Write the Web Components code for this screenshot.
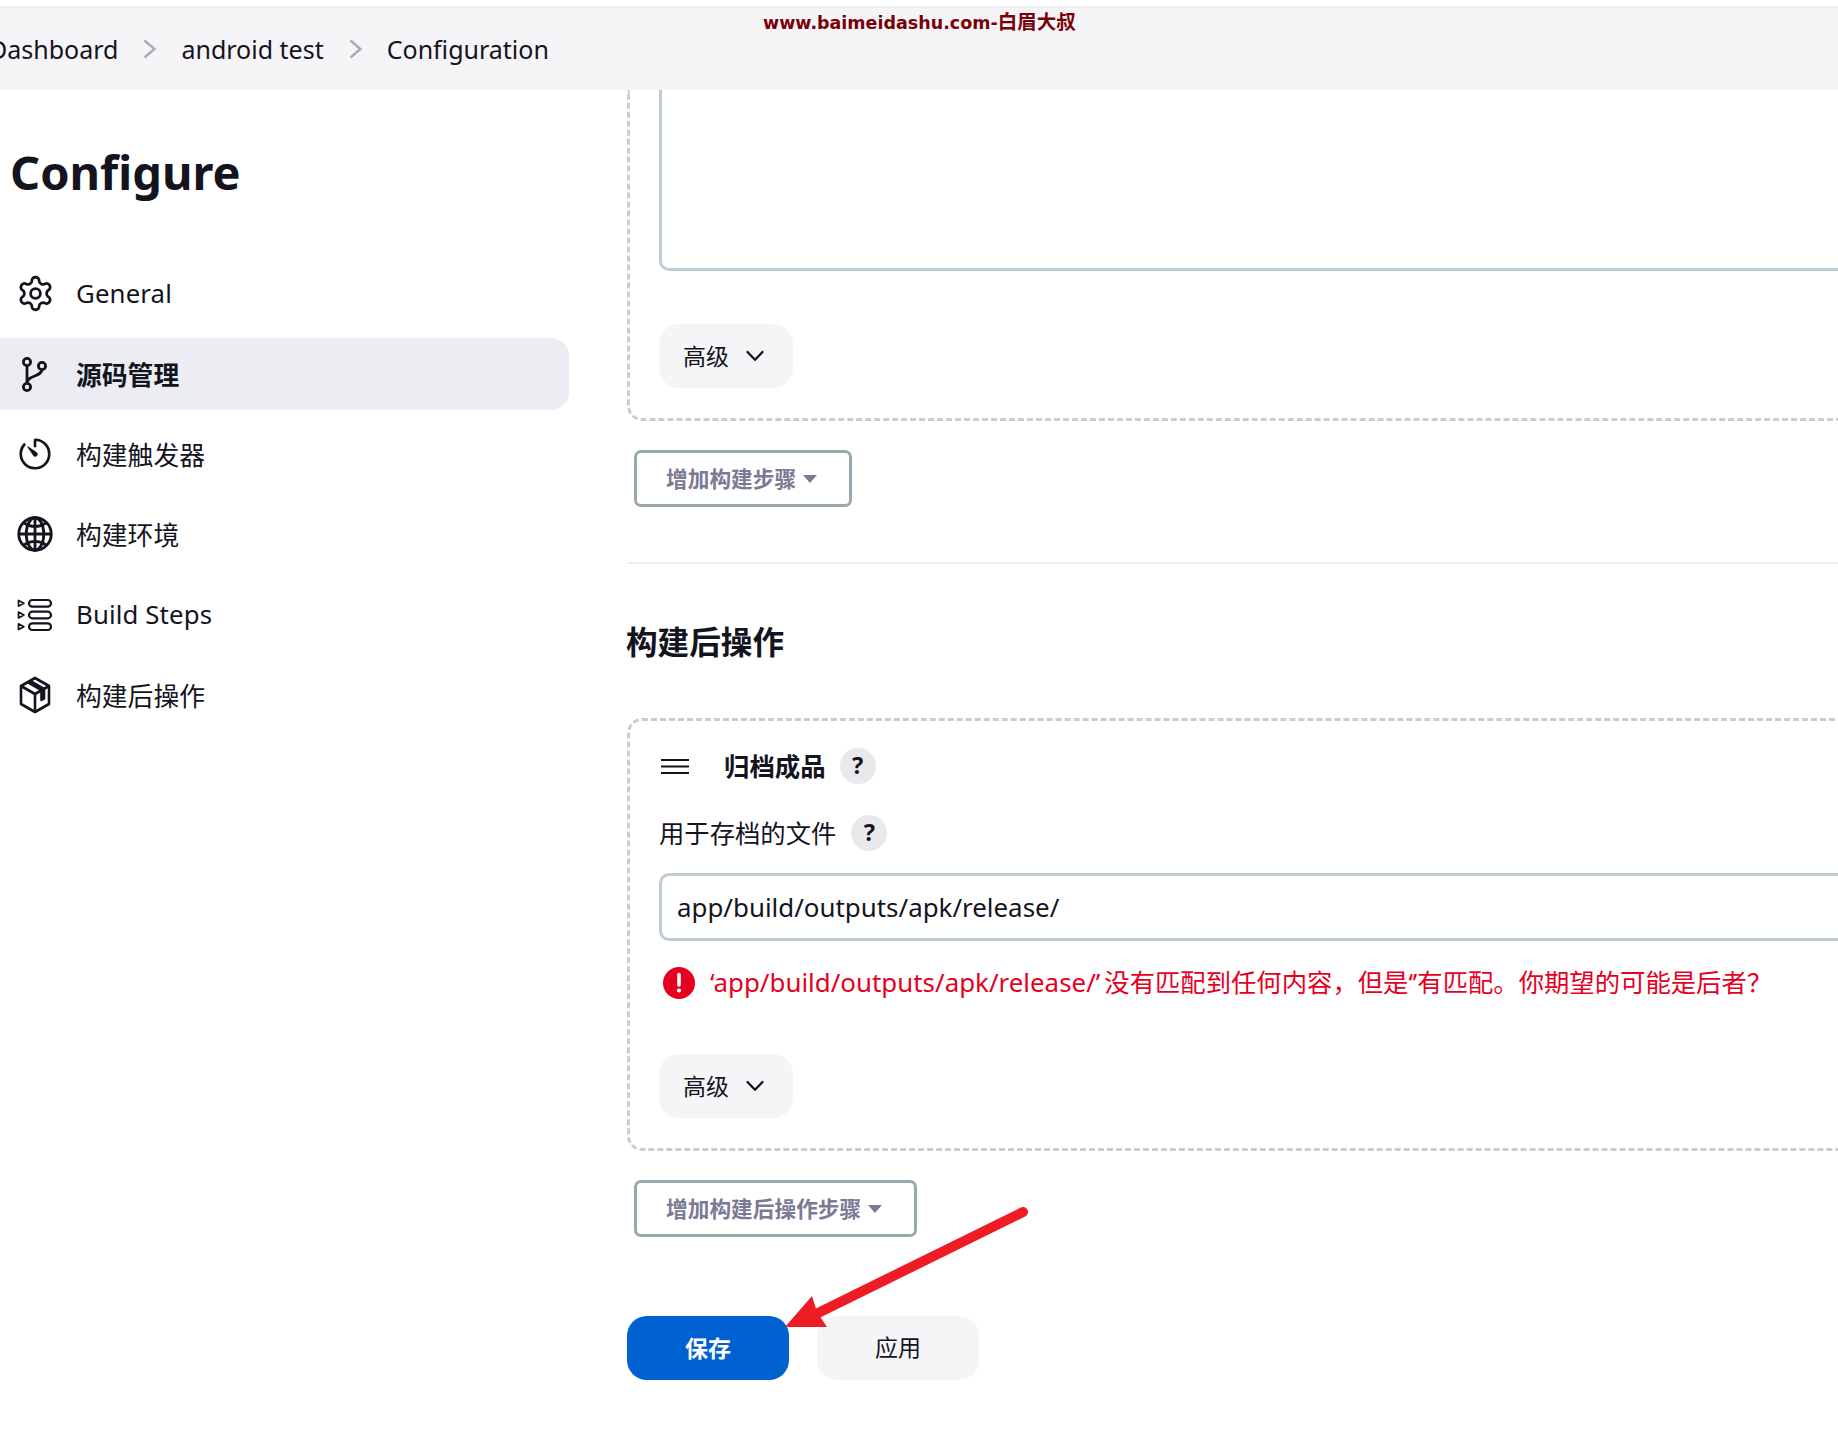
<!DOCTYPE html>
<html lang="zh-CN">
<head>
<meta charset="utf-8">
<title>Configure</title>
<style>
  html, body { margin: 0; padding: 0; overflow: hidden; background: #fff; }
  body { font-family: "Noto Sans", "Noto Sans CJK SC", sans-serif; color: #14141f; }
</style>
</head>
<body>

<jk-app>
  <jk-breadcrumb slot="top"></jk-breadcrumb>
  <jk-sidebar slot="side"></jk-sidebar>

  <jk-box slot="main" clipped>
    <jk-textarea></jk-textarea>
    <jk-advanced style="margin-top:53px"></jk-advanced>
  </jk-box>
  <jk-add-button slot="main" style="margin-top:29px">增加构建步骤</jk-add-button>
  <jk-section-title slot="main">构建后操作</jk-section-title>
  <jk-box slot="main" style="margin-top:56px">
    <jk-step-head>归档成品</jk-step-head>
    <jk-field label="用于存档的文件" value="app/build/outputs/apk/release/"><span style="font-size:25.9px;margin:0 4px 0 1px">‘app/build/outputs/apk/release/’</span>没有匹配到任何内容，但是‘’有匹配。你期望的可能是后者？</jk-field>
    <jk-advanced style="margin-top:55px"></jk-advanced>
  </jk-box>
  <jk-add-button slot="main" style="margin-top:29px">增加构建后操作步骤</jk-add-button>
  <jk-actions slot="main"></jk-actions>

  <jk-watermark slot="over"></jk-watermark>
  <jk-arrow slot="over"></jk-arrow>
</jk-app>

<script>
// small helper, every element just sets its shadow html once
class Base extends HTMLElement {
  constructor() {
    super();
    this.attachShadow({ mode: 'open' });
  }
  connectedCallback() {
    this.shadowRoot.innerHTML = this.markup();
  }
}

class JkApp extends Base {
  markup() {
    return `
      <style>
        :host { display: block; position: relative; width: 1838px; height: 1435px; overflow: hidden; }
        .line { height: 2px; margin-top: 6px; background: #eeeef0; }
        .layout { display: grid; grid-template-columns: 569px 1400px; column-gap: 58px; }
        .main { display: flex; flex-direction: column; align-items: flex-start; }
      </style>
      <div class="line"></div>
      <slot name="top"></slot>
      <div class="layout">
        <slot name="side"></slot>
        <div class="main"><slot name="main"></slot></div>
      </div>
      <slot name="over"></slot>`;
  }
}

class JkBreadcrumb extends Base {
  markup() {
    const chev = `<svg width="13" height="20" viewBox="0 0 13 20"><path d="M1.5 1.5 L11.5 10 L1.5 18.5" fill="none" stroke="#a9a9b8" stroke-width="2.4"/></svg>`;
    return `
      <style>
        :host { display: block; height: 82px; background: #f5f5f8; overflow: hidden; }
        ul { display: flex; align-items: center; gap: 25px; height: 82px; margin: 0 0 0 -11px; padding: 0; list-style: none;
             font-size: 25px; color: #14141f; }
        svg { display: block; }
      </style>
      <ul>
        <li>Dashboard</li><li>${chev}</li>
        <li>android test</li><li>${chev}</li>
        <li>Configuration</li>
      </ul>`;
  }
}

const ICONS = {
  gear: `<svg viewBox="0 0 24 24" width="39" height="39" fill="none" stroke="#14141f" stroke-width="1.7" stroke-linejoin="round"><path d="M12.22 2h-.44a2 2 0 0 0-2 2v.18a2 2 0 0 1-1 1.73l-.43.25a2 2 0 0 1-2 0l-.15-.08a2 2 0 0 0-2.73.73l-.22.38a2 2 0 0 0 .73 2.73l.15.1a2 2 0 0 1 1 1.72v.51a2 2 0 0 1-1 1.74l-.15.09a2 2 0 0 0-.73 2.73l.22.38a2 2 0 0 0 2.73.73l.15-.08a2 2 0 0 1 2 0l.43.25a2 2 0 0 1 1 1.73V20a2 2 0 0 0 2 2h.44a2 2 0 0 0 2-2v-.18a2 2 0 0 1 1-1.73l.43-.25a2 2 0 0 1 2 0l.15.08a2 2 0 0 0 2.73-.73l.22-.39a2 2 0 0 0-.73-2.73l-.15-.08a2 2 0 0 1-1-1.74v-.5a2 2 0 0 1 1-1.74l.15-.09a2 2 0 0 0 .73-2.73l-.22-.38a2 2 0 0 0-2.73-.73l-.15.08a2 2 0 0 1-2 0l-.43-.25a2 2 0 0 1-1-1.73V4a2 2 0 0 0-2-2z"/><circle cx="12" cy="12" r="3"/></svg>`,
  branch: `<svg viewBox="0 0 36 36" width="36" height="36" fill="none" stroke="#14141f" stroke-width="2.8"><circle cx="10" cy="6" r="3.6"/><circle cx="25" cy="10" r="3.6"/><circle cx="10" cy="31" r="3.6"/><path d="M10 9.6V27.4M25 13.6C25 21 10 19 10 27"/></svg>`,
  timer: `<svg viewBox="0 0 512 512" width="38" height="38" style="margin-left:-1px"><path d="M112.91 128A191.85 191.85 0 0064 254c-1.18 106.35 85.65 193.8 192 194 106.2.2 192-85.83 192-192 0-104.54-83.55-189.61-187.5-192a4.36 4.36 0 00-4.5 4.37V152" fill="none" stroke="#14141f" stroke-width="36" stroke-linecap="round" stroke-linejoin="round"/><path fill="#14141f" d="M233.38 278.63l-79-113a8.13 8.13 0 0111.32-11.32l113 79a32.5 32.5 0 01-37.25 53.26 33.21 33.21 0 01-8.07-7.94z"/></svg>`,
  globe: `<svg viewBox="0 0 512 512" width="40" height="40" fill="none" stroke="#14141f" stroke-width="36"><path d="M256 48C141.13 48 48 141.13 48 256s93.13 208 208 208 208-93.13 208-208S370.87 48 256 48z"/><path d="M256 48c-58.07 0-112.67 92.13-112.67 208S197.93 464 256 464s112.67-93.13 112.67-208S314.07 48 256 48z"/><path d="M117.33 117.33c38.24 27.15 86.38 43.34 138.67 43.34s100.43-16.19 138.67-43.34M394.67 394.67c-38.24-27.15-86.38-43.34-138.67-43.34s-100.43 16.19-138.67 43.34M256 48v416M464 256H48"/></svg>`,
  steps: `<svg viewBox="0 0 36 36" width="36" height="36" fill="none" stroke="#14141f" stroke-width="2.2"><rect x="12" y="3" width="22" height="6.6" rx="3.3"/><rect x="12" y="14.7" width="22" height="6.6" rx="3.3"/><rect x="12" y="26.4" width="22" height="6.6" rx="3.3"/><path stroke-width="1.7" stroke-linejoin="round" d="M1.5 3.4L6.9 6.3 1.5 9.2zM1.5 15.1L6.9 18 1.5 20.9zM1.5 26.8L6.9 29.7 1.5 32.6z"/></svg>`,
  box: `<svg viewBox="0 0 36 38" width="36" height="38" fill="none" stroke="#14141f" stroke-width="2.6" stroke-linejoin="round"><path d="M18 2L32 10V28L18 36 4 28V10z"/><path d="M4 10L18 18 32 10M18 18V36"/><path d="M10.5 6.2L24.5 14.2V24L27 22.5V13L13 5"/></svg>`
};

class JkNavItem extends Base {
  markup() {
    const active = this.hasAttribute('active');
    // latin labels sit a bit higher than the cjk ones
    const lift = this.hasAttribute('latin') ? 2 : 0;
    return `
      <style>
        :host { display: block; }
        a { display: flex; align-items: center; height: 71.6px; border-radius: 0 18px 18px 0; color: #14141f; font-size: 25.8px;
            background: ${active ? '#ecedf2' : 'transparent'}; font-weight: ${active ? 700 : 400}; }
        .ic { flex: 0 0 42px; display: flex; justify-content: center; margin: 0 20px 0 14px; }
        .tx { padding-bottom: ${lift}px; letter-spacing: ${lift ? '0.12px' : '0'}; }
        svg { display: block; }
      </style>
      <a><span class="ic">${ICONS[this.getAttribute('icon')]}</span><span class="tx"><slot></slot></span></a>`;
  }
}

class JkSidebar extends Base {
  markup() {
    return `
      <style>
        :host { display: block; }
        h1 { margin: 52px 0 56px 10px; font-size: 47px; line-height: 60px; font-weight: 700; color: #14141f; }
        nav { display: flex; flex-direction: column; gap: 8.6px; }
      </style>
      <h1>Configure</h1>
      <nav>
        <jk-nav-item icon="gear" latin>General</jk-nav-item>
        <jk-nav-item icon="branch" active>源码管理</jk-nav-item>
        <jk-nav-item icon="timer">构建触发器</jk-nav-item>
        <jk-nav-item icon="globe">构建环境</jk-nav-item>
        <jk-nav-item icon="steps" latin>Build Steps</jk-nav-item>
        <jk-nav-item icon="box">构建后操作</jk-nav-item>
      </nav>`;
  }
}

class JkBox extends Base {
  markup() {
    return `
      <style>
        :host { display: block; width: 100%; box-sizing: border-box; border: 3px dashed #c5ced4; border-radius: 15px;
                padding: 27px 29px 30px; }
        :host([clipped]) { border-top: 0; border-top-left-radius: 0; border-top-right-radius: 0; padding-top: 0; }
      </style>
      <slot></slot>`;
  }
}

class JkTextarea extends Base {
  markup() {
    return `
      <style>
        :host { display: block; height: 181px; box-sizing: border-box; border: 3px solid #c0ccd3; border-top: 0;
                border-radius: 0 0 10px 10px; background: #fff; }
      </style>`;
  }
}

class JkAdvanced extends Base {
  markup() {
    return `
      <style>
        :host { display: block; width: 134px; }
        button { display: flex; align-items: center; gap: 17px; width: 134px; height: 64px; padding: 0 0 2px 24px; box-sizing: border-box;
                 border: 0; border-radius: 20px; background: #f5f5f8; color: #14141f; font: inherit; font-size: 23px; }
        svg { display: block; margin-top: 2px; }
      </style>
      <button>高级<svg width="18" height="12" viewBox="0 0 18 12"><path d="M1.5 2L9 9.8 16.5 2" fill="none" stroke="#14141f" stroke-width="2.3" stroke-linecap="round" stroke-linejoin="round"/></svg></button>`;
  }
}

class JkAddButton extends Base {
  markup() {
    return `
      <style>
        :host { display: block; margin-left: 7px; }
        button { display: flex; align-items: center; gap: 7px; height: 57px; box-sizing: border-box; padding: 0 32px 2px 29px;
                 border: 3px solid #9aa8b0; border-radius: 7px; background: #fff; color: #7a7a95; font: inherit; font-size: 21.7px; font-weight: 700; }
        i { display: block; width: 0; height: 0; margin-top: 2px; border: 7.5px solid transparent; border-top: 8px solid #7a7a95; border-bottom: 0; }
      </style>
      <button><slot></slot><i></i></button>`;
  }
}

class JkSectionTitle extends Base {
  markup() {
    return `
      <style>
        :host { display: block; align-self: stretch; margin-top: 55px; border-top: 2px solid #eeeef0; padding-top: 58px; }
        h2 { margin: 0 0 0 -1px; font-size: 31.6px; line-height: 40px; font-weight: 700; color: #14141f; }
      </style>
      <h2><slot></slot></h2>`;
  }
}

class JkHelp extends Base {
  markup() {
    return `
      <style>
        :host { display: block; width: 36px; height: 36px; border-radius: 50%; background: #e9e9ec; text-align: center;
                font-family: "Noto Sans", sans-serif; font-size: 23.5px; line-height: 35px; font-weight: 700; color: #14141f; }
      </style>?`;
  }
}

class JkStepHead extends Base {
  markup() {
    return `
      <style>
        :host { display: flex; align-items: center; height: 36px; font-size: 25.4px; font-weight: 700; color: #14141f; }
        .grip { width: 28px; height: 15px; margin: 0 35px 0 2px; display: block; }
        span { padding-bottom: 2px; }
        jk-help { margin-left: 14px; }
      </style>
      <svg class="grip" viewBox="0 0 28 15"><path d="M0 1h28M0 7.5h28M0 14h28" stroke="#14141f" stroke-width="2"/></svg>
      <span><slot></slot></span><jk-help></jk-help>`;
  }
}

class JkField extends Base {
  markup() {
    return `
      <style>
        :host { display: block; font-size: 25.35px; }
        .label { display: flex; align-items: center; gap: 15px; height: 36px; margin-top: 31px; color: #14141f; }
        .label span { padding-bottom: 2px; }
        .input { height: 68px; box-sizing: border-box; margin-top: 22px; padding-left: 15px; display: flex; align-items: center;
                 border: 3px solid #c0ccd3; border-radius: 10px; font-size: 25.9px; color: #14141f; }
        .err { display: flex; align-items: center; gap: 14px; margin-top: 26px; height: 32px; margin-left: 4px; color: #e6001f; white-space: nowrap; }
        .err span { padding-bottom: 4px; }
        .dot { flex: 0 0 32px; height: 32px; border-radius: 50%; background: #e6001f; color: #fff; display: block; }
      </style>
      <div class="label"><span>${this.getAttribute('label')}</span><jk-help></jk-help></div>
      <div class="input">${this.getAttribute('value')}</div>
      <div class="err">
        <svg class="dot" viewBox="0 0 32 32"><path d="M16 7.5V18" stroke="#fff" stroke-width="3.6" stroke-linecap="round"/><circle cx="16" cy="23.5" r="2.1" fill="#fff"/></svg>
        <span><slot></slot></span>
      </div>`;
  }
}

class JkActions extends Base {
  markup() {
    return `
      <style>
        :host { display: flex; gap: 28px; margin-top: 79px; }
        button { width: 162px; height: 64px; padding: 0 0 3px; border: 0; border-radius: 20px; font: inherit; font-size: 23px; }
        .save { background: #0062d1; color: #fff; font-weight: 700; }
        .apply { background: #f5f5f8; color: #14141f; padding-bottom: 4px; }
      </style>
      <button class="save">保存</button><button class="apply">应用</button>`;
  }
}

class JkWatermark extends Base {
  markup() {
    return `
      <style>
        :host { position: absolute; left: 763px; top: 11px; font-family: "DejaVu Sans", "Noto Sans CJK SC", sans-serif;
                font-size: 17.5px; line-height: 24px; font-weight: 700; color: #7a0008; white-space: nowrap; }
        span { font-size: 19.5px; }
      </style>www.baimeidashu.com-<span>白眉大叔</span>`;
  }
}

class JkArrow extends Base {
  markup() {
    return `
      <style>
        :host { position: absolute; left: 0; top: 0; width: 1838px; height: 1435px; pointer-events: none; }
        svg { display: block; }
      </style>
      <svg width="1838" height="1435" viewBox="0 0 1838 1435">
        <path d="M1023 1212L812 1316" stroke="#ee1c25" stroke-width="10" stroke-linecap="round"/>
        <path d="M785 1327L812 1296 817 1312 827 1327z" fill="#ee1c25"/>
      </svg>`;
  }
}

customElements.define('jk-app', JkApp);
customElements.define('jk-breadcrumb', JkBreadcrumb);
customElements.define('jk-nav-item', JkNavItem);
customElements.define('jk-sidebar', JkSidebar);
customElements.define('jk-box', JkBox);
customElements.define('jk-textarea', JkTextarea);
customElements.define('jk-advanced', JkAdvanced);
customElements.define('jk-add-button', JkAddButton);
customElements.define('jk-section-title', JkSectionTitle);
customElements.define('jk-help', JkHelp);
customElements.define('jk-step-head', JkStepHead);
customElements.define('jk-field', JkField);
customElements.define('jk-actions', JkActions);
customElements.define('jk-watermark', JkWatermark);
customElements.define('jk-arrow', JkArrow);
</script>
</body>
</html>
